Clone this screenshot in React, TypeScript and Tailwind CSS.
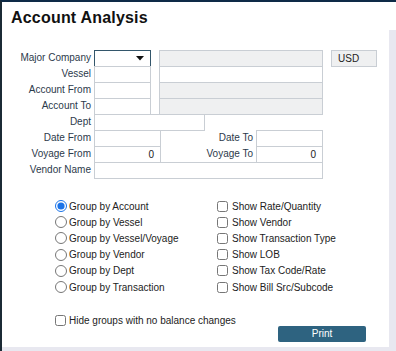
import React from 'react';

const font = "font-['Liberation_Sans',Arial,sans-serif]";

const boxBase = 'h-[17px] border border-[#c9ced4] shrink-0 flex items-center text-[10px] text-[#222]';

interface FieldProps {
  width: string;
  gray?: boolean;
  value?: string;
  align?: 'left' | 'right';
}

const Field: React.FC<FieldProps> = ({ width, gray, value, align = 'left' }) => (
  <div
    className={`${boxBase} ${width} ${gray ? 'bg-[#eff0f1]' : 'bg-white'} ${
      align === 'right' ? 'justify-end pr-[6px]' : 'pl-[6px]'
    }`}
  >
    {value}
  </div>
);

const Label: React.FC<{ children: React.ReactNode; width?: string }> = ({ children, width = 'w-[92px]' }) => (
  <div className={`${width} shrink-0 pr-[3px] text-right text-[10px] text-[#2c3a4b] leading-[16px]`}>{children}</div>
);

const Row: React.FC<{ children: React.ReactNode }> = ({ children }) => (
  <div className="flex h-[16px] items-start">{children}</div>
);

const groupOptions = [
  'Group by Account',
  'Group by Vessel',
  'Group by Vessel/Voyage',
  'Group by Vendor',
  'Group by Dept',
  'Group by Transaction',
];

const showOptions = [
  'Show Rate/Quantity',
  'Show Vendor',
  'Show Transaction Type',
  'Show LOB',
  'Show Tax Code/Rate',
  'Show Bill Src/Subcode',
];

export default function App() {
  return (
    <div
      className={`${font} w-[396px] h-[351px] bg-[#e8e8f0] border-t-2 border-t-[#0e2a47] border-l-2 border-l-[#1b2a35] flex flex-col overflow-hidden`}
    >
      {/* Header */}
      <div className="h-[28px] bg-white pl-[9px] pt-[6px] shrink-0">
        <h1 className="text-[16px] leading-[20px] font-bold text-[#111] tracking-[0.2px]">Account Analysis</h1>
      </div>

      <div className="flex flex-1 min-h-0">
        {/* Panel */}
        <div className="w-[387px] h-[317px] bg-white pt-[20px] flex flex-col">
          {/* Filter form */}
          <div className="flex flex-col">
            <Row>
              <Label>Major Company</Label>
              <div className="h-[17px] w-[57px] shrink-0 border border-[#33566b] bg-white flex items-center justify-end pr-[6px]">
                <svg width="8" height="5" viewBox="0 0 8 5">
                  <polygon points="0,0 8,0 4,4.5" fill="#111" />
                </svg>
              </div>
              <div className="w-[8px] shrink-0" />
              <Field width="w-[164px]" gray />
              <div className="w-[8px] shrink-0" />
              <Field width="w-[46px]" gray value="USD" />
            </Row>
            <Row>
              <Label>Vessel</Label>
              <Field width="w-[57px]" />
              <div className="w-[8px] shrink-0" />
              <Field width="w-[164px]" />
            </Row>
            <Row>
              <Label>Account From</Label>
              <Field width="w-[57px]" />
              <div className="w-[8px] shrink-0" />
              <Field width="w-[164px]" gray />
            </Row>
            <Row>
              <Label>Account To</Label>
              <Field width="w-[57px]" />
              <div className="w-[8px] shrink-0" />
              <Field width="w-[164px]" gray />
            </Row>
            <Row>
              <Label>Dept</Label>
              <Field width="w-[111px]" />
            </Row>
            <Row>
              <Label>Date From</Label>
              <Field width="w-[67px]" />
              <Label width="w-[95px]">Date To</Label>
              <Field width="w-[67px]" />
            </Row>
            <Row>
              <Label>Voyage From</Label>
              <Field width="w-[67px]" value="0" align="right" />
              <Label width="w-[95px]">Voyage To</Label>
              <Field width="w-[67px]" value="0" align="right" />
            </Row>
            <Row>
              <Label>Vendor Name</Label>
              <Field width="w-[229px]" />
            </Row>
          </div>

          {/* Options */}
          <div className="mt-[20px] pl-[53px] flex">
            <div className="w-[162px] flex flex-col">
              {groupOptions.map((opt, i) => (
                <label key={opt} className="h-[16.2px] flex items-center gap-[2px] text-[10px] text-[#222]">
                  <input
                    type="radio"
                    name="group"
                    defaultChecked={i === 0}
                    className="m-0 w-[12px] h-[12px] accent-[#1a73e8]"
                  />
                  <span>{opt}</span>
                </label>
              ))}
            </div>
            <div className="flex flex-col">
              {showOptions.map(opt => (
                <label key={opt} className="h-[16.2px] flex items-center gap-[4px] text-[10px] text-[#222]">
                  <input type="checkbox" className="m-0 w-[11px] h-[11px]" />
                  <span>{opt}</span>
                </label>
              ))}
            </div>
          </div>

          <label className="mt-[18px] ml-[53px] h-[14px] flex items-center gap-[3px] text-[10px] text-[#222]">
            <input type="checkbox" className="m-0 w-[11px] h-[11px]" />
            <span>Hide groups with no balance changes</span>
          </label>

          <button className="-mt-[1px] ml-[276px] w-[88px] h-[16px] rounded-[2px] bg-[#2e6380] text-white text-[10px] leading-[16px]">
            Print
          </button>
        </div>
        <div className="flex-1" />
      </div>
    </div>
  );
}
